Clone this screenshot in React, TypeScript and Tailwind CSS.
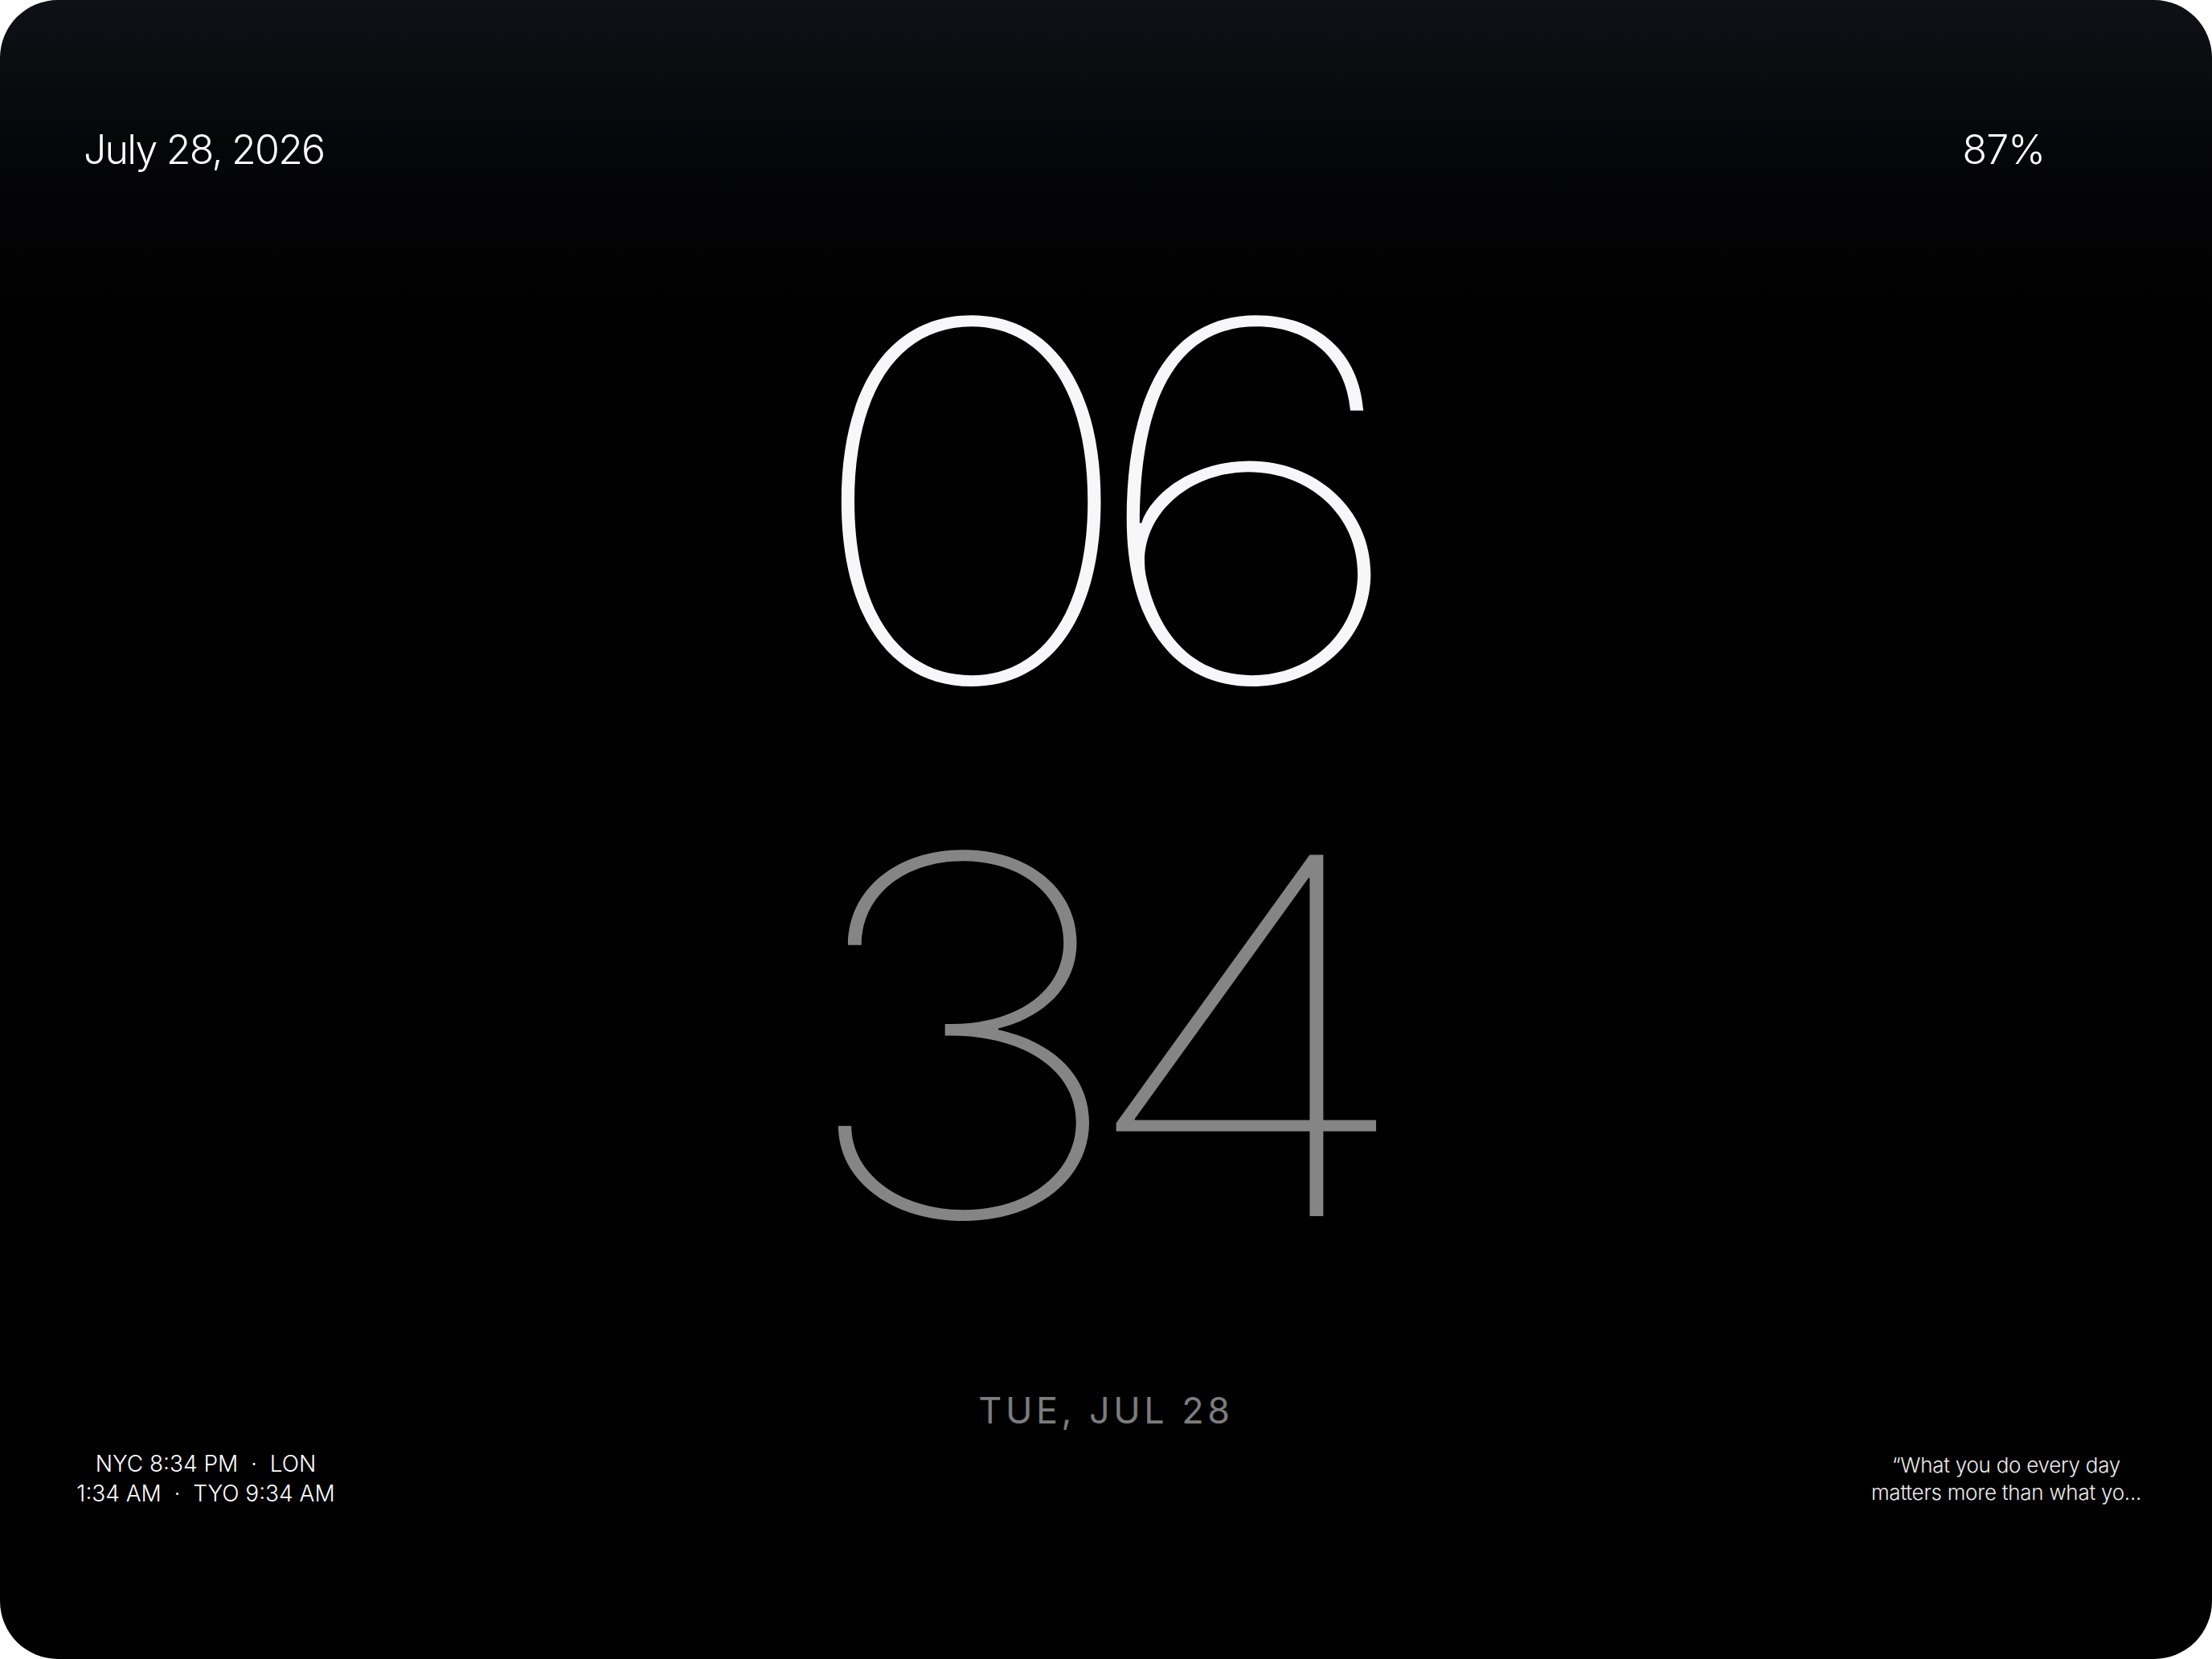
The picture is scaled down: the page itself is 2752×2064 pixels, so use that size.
import React from "react";

// Standby clock screen
export default function App() {
  const font = { fontFamily: "Inter, 'Noto Sans', sans-serif" };

  return (
    <div className="w-[2752px] h-[2064px] bg-white" style={font}>
      <div className="w-full h-full rounded-[72px] overflow-hidden bg-linear-to-b from-[#101116] to-black to-[30%] flex flex-col pt-[160px]">
        {/* Top bar */}
        <div className="flex items-start justify-between pl-[104px] pr-[208px] h-[52px]">
          <span className="text-[50px] leading-none font-light tracking-[-0.035em] text-white mt-[1px]">July 28, 2026</span>
          <span className="text-[50px] leading-none font-light tracking-[-0.02em] text-white mt-[1px]">87%</span>
        </div>

        {/* Hours / minutes */}
        <div className="mt-[79px] flex flex-col items-center font-[140] text-[618px] leading-[665px] tracking-[-0.1em]">
          <span className="scale-x-[1.17] pr-[0.1em] text-[#f7f7f9]">06</span>
          <span className="scale-x-[1.17] pr-[0.1em] text-[#858585]">34</span>
        </div>

        {/* Day label */}
        <div className="mt-[111px] flex justify-center">
          <span className="text-[45px] leading-none font-normal tracking-[0.1em] text-[#7c7c7c]">TUE, JUL 28</span>
        </div>

        {/* Bottom row */}
        <div className="mt-[26px] flex items-start justify-between px-[56px]">
          <div className="w-[400px] text-center text-[28px] leading-[37px] font-light text-white">
            NYC 8:34 PM&nbsp; · &nbsp;LON
            <br />
            1:34 AM&nbsp; · &nbsp;TYO 9:34 AM
          </div>
          <div className="w-[400px] mt-[3px] text-center text-[26px] leading-[34px] font-light tracking-[-0.01em] text-[#ececec]">
            “What you do every day
            <br />
            matters more than what yo...
          </div>
        </div>
      </div>
    </div>
  );
}
